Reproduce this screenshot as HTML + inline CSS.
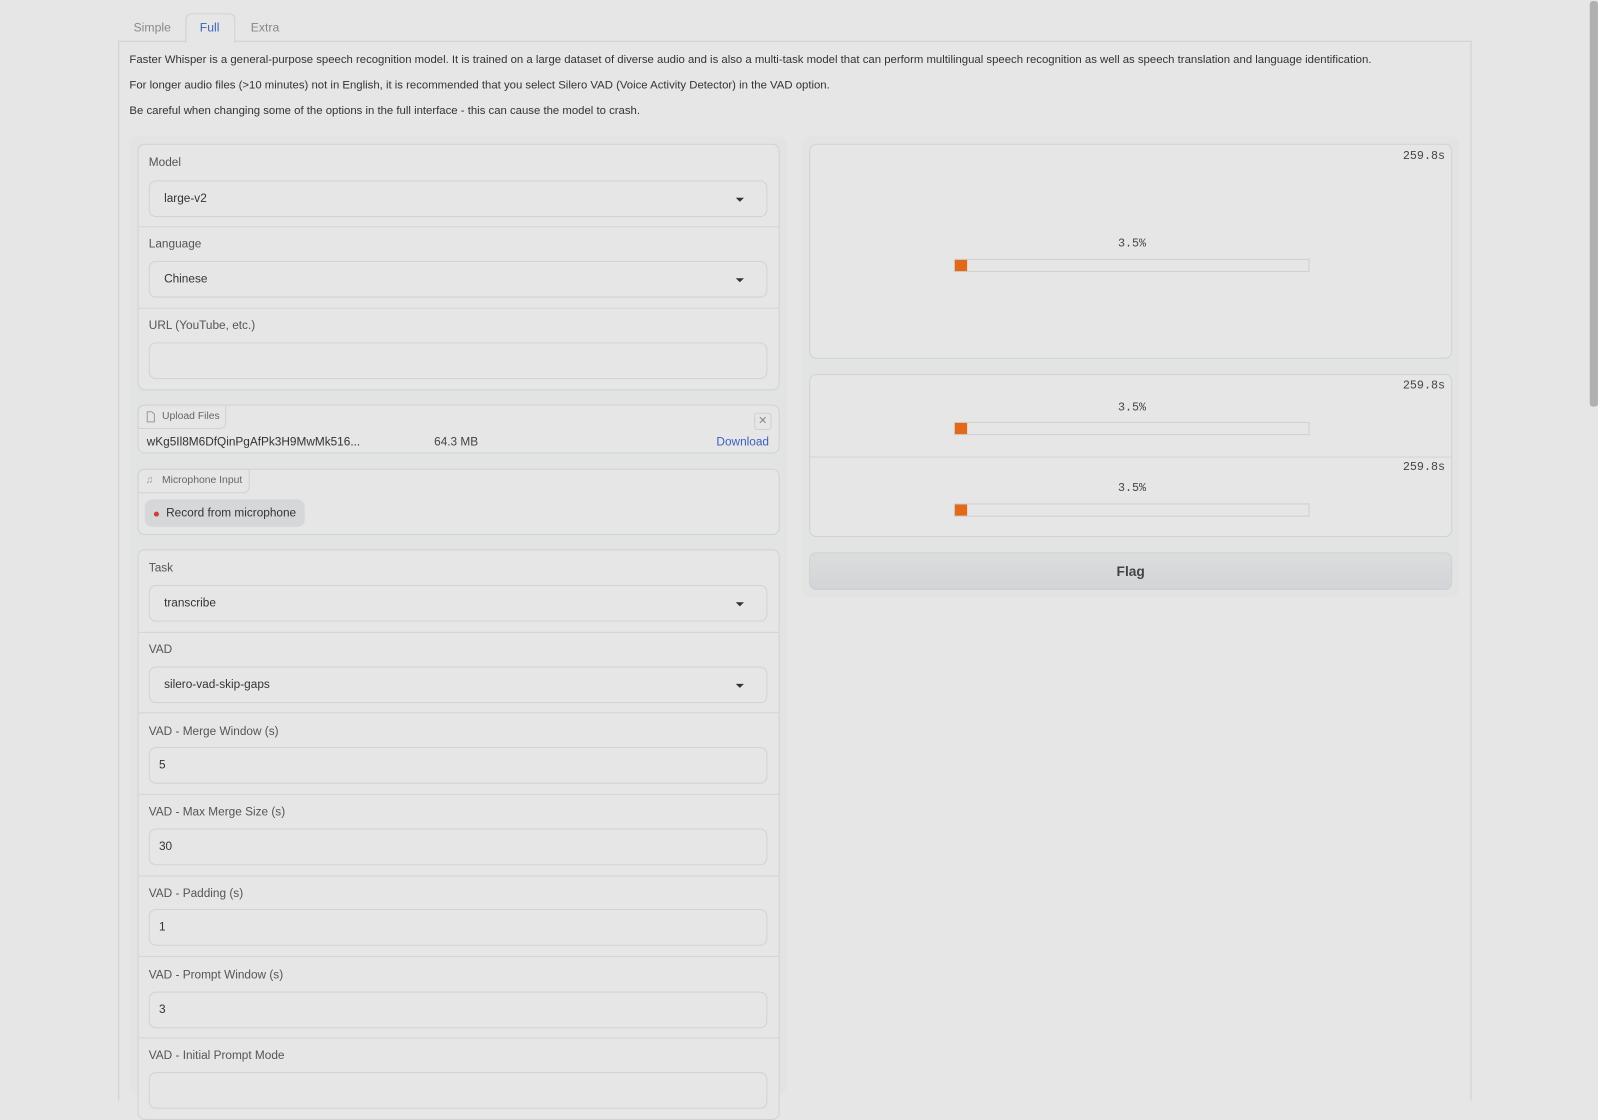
<!DOCTYPE html>
<html><head><meta charset="utf-8"><style>
html,body{margin:0;padding:0;width:1598px;height:1081px;overflow:hidden;background:#e6e6e6;}
#w{position:absolute;left:0;top:0;width:1568px;height:1061px;transform:scale(1.0191);transform-origin:0 0;font-family:"Liberation Sans",sans-serif;color:#3c3c3c;font-size:11.6px;}
.a{position:absolute;box-sizing:border-box;}
.lbl{position:absolute;font-size:11.6px;color:#555;}
.in{position:absolute;left:11px;width:607px;height:36px;border:1px solid #d2d2d2;border-radius:7px;background:#e6e6e6;box-sizing:border-box;font-size:11.6px;padding:10px 14px;color:#333;}
.arr{position:absolute;right:22px;top:16px;width:0;height:0;border-left:4px solid transparent;border-right:4px solid transparent;border-top:4px solid #333;}
.sep{position:absolute;left:0;right:0;height:1px;background:#d4d4d4;}
.mono{font-family:"Liberation Mono",monospace;font-size:11.5px;color:#444;position:absolute;}
.bar{position:absolute;left:141px;width:349px;height:13px;border:1px solid #cfcfcf;box-sizing:border-box;background:#e6e6e6;}
.bar i{position:absolute;left:0;top:0;width:12px;height:11px;background:#e2691a;}
</style></head><body><div id="w">
<div class="a" style="left:131px;top:20px;color:#888;font-size:12px">Simple</div>
<div class="a" style="left:182px;top:13px;width:49px;height:29px;border:1px solid #d0d0d0;border-bottom:none;border-radius:6px 6px 0 0;background:#e6e6e6;z-index:2"></div>
<div class="a" style="left:196px;top:20px;color:#3c64b4;font-size:12px;z-index:3">Full</div>
<div class="a" style="left:246px;top:20px;color:#888;font-size:12px">Extra</div>
<div class="a" style="left:116px;top:40px;width:1328px;height:1040px;border:1px solid #d0d0d0;border-bottom:none"></div>
<div class="a" style="left:127px;top:53px;font-size:11.15px;color:#333;white-space:nowrap">Faster Whisper is a general-purpose speech recognition model. It is trained on a large dataset of diverse audio and is also a multi-task model that can perform multilingual speech recognition as well as speech translation and language identification.</div>
<div class="a" style="left:127px;top:78px;font-size:11.15px;color:#333;white-space:nowrap">For longer audio files (&gt;10 minutes) not in English, it is recommended that you select Silero VAD (Voice Activity Detector) in the VAD option.</div>
<div class="a" style="left:127px;top:103px;font-size:11.15px;color:#333;white-space:nowrap">Be careful when changing some of the options in the full interface - this can cause the model to crash.</div>
<div class="a" style="left:127px;top:134px;width:645px;height:940px;background:#e2e3e3;border-radius:8px"></div>
<div class="a" style="left:787px;top:134px;width:645px;height:452px;background:#e2e3e3;border-radius:8px"></div>
<div class="a" style="left:135px;top:141px;width:630px;height:242px;border:1px solid #d2d2d2;border-radius:7px;background:#e6e6e6">
 <div class="lbl" style="left:10px;top:11px">Model</div>
 <div class="in" style="top:35px;left:10px">large-v2<div class="arr"></div></div>
 <div class="sep" style="top:80px"></div>
 <div class="lbl" style="left:10px;top:91px">Language</div>
 <div class="in" style="top:114px;left:10px">Chinese<div class="arr"></div></div>
 <div class="sep" style="top:160px"></div>
 <div class="lbl" style="left:10px;top:171px">URL (YouTube, etc.)</div>
 <div class="in" style="top:194px;left:10px"></div>
</div>
<div class="a" style="left:135px;top:397px;width:630px;height:48px;border:1px solid #d2d2d2;border-radius:7px;background:#e6e6e6">
 <div class="a" style="left:-1px;top:-1px;width:87px;height:24px;border:1px solid #d2d2d2;border-radius:6px 0 6px 0;font-size:10.2px;color:#666;padding:5px 0 0 23px">Upload Files</div>
 <svg class="a" style="left:7px;top:5px" width="10" height="12" viewBox="0 0 10 12"><path d="M1.5 1h4.5l2.5 2.5v7.5h-7z" fill="none" stroke="#999" stroke-width="1"/></svg>
 <div class="a" style="left:604px;top:7px;width:17px;height:17px;border:1px solid #d0d0d0;border-radius:3px;color:#888;font-size:11px;text-align:center;line-height:15px">✕</div>
 <div class="a" style="left:8px;top:29px;font-size:11.6px;color:#333">wKg5Il8M6DfQinPgAfPk3H9MwMk516...</div>
 <div class="a" style="left:290px;top:29px;font-size:11.6px;color:#444">64.3 MB</div>
 <div class="a" style="left:567px;top:29px;font-size:11.6px;color:#3b5fc0">Download</div>
</div>
<div class="a" style="left:135px;top:460px;width:630px;height:65px;border:1px solid #d2d2d2;border-radius:7px;background:#e6e6e6">
 <div class="a" style="left:-1px;top:-1px;width:110px;height:24px;border:1px solid #d2d2d2;border-radius:6px 0 6px 0;font-size:10.2px;color:#666;padding:5px 0 0 23px">Microphone Input</div>
 <div class="a" style="left:7px;top:5px;font-size:10px;color:#999">♫</div>
 <div class="a" style="left:6px;top:29px;width:157px;height:27px;border-radius:7px;background:#d6d7d9;font-size:11.6px;color:#333;padding:7px 0 0 21px">Record from microphone</div>
 <div class="a" style="left:15px;top:41px;width:5px;height:5px;border-radius:50%;background:#d23c3c"></div>
</div>
<div class="a" style="left:135px;top:539px;width:630px;height:560px;border:1px solid #d2d2d2;border-radius:7px;background:#e6e6e6">
 <div class="lbl" style="left:10px;top:11px">Task</div>
 <div class="in" style="top:34px;left:10px">transcribe<div class="arr"></div></div>
 <div class="sep" style="top:80px"></div>
 <div class="lbl" style="left:10px;top:91px">VAD</div>
 <div class="in" style="top:114px;left:10px">silero-vad-skip-gaps<div class="arr"></div></div>
 <div class="sep" style="top:159px"></div>
 <div class="lbl" style="left:10px;top:171px">VAD - Merge Window (s)</div>
 <div class="in" style="top:193px;left:10px;padding-left:9px">5</div>
 <div class="sep" style="top:239px"></div>
 <div class="lbl" style="left:10px;top:250px">VAD - Max Merge Size (s)</div>
 <div class="in" style="top:273px;left:10px;padding-left:9px">30</div>
 <div class="sep" style="top:319px"></div>
 <div class="lbl" style="left:10px;top:330px">VAD - Padding (s)</div>
 <div class="in" style="top:352px;left:10px;padding-left:9px">1</div>
 <div class="sep" style="top:398px"></div>
 <div class="lbl" style="left:10px;top:410px">VAD - Prompt Window (s)</div>
 <div class="in" style="top:433px;left:10px;padding-left:9px">3</div>
 <div class="sep" style="top:478px"></div>
 <div class="lbl" style="left:10px;top:489px">VAD - Initial Prompt Mode</div>
 <div class="in" style="top:512px;left:10px"></div>
</div>
<div class="a" style="left:794px;top:141px;width:631px;height:211px;border:1px solid #d2d2d2;border-radius:7px;background:#e6e6e6">
 <div class="mono" style="right:6px;top:5px">259.8s</div>
 <div class="mono" style="left:302px;top:91px">3.5%</div>
 <div class="bar" style="top:112px"><i></i></div>
</div>
<div class="a" style="left:794px;top:367px;width:631px;height:160px;border:1px solid #d2d2d2;border-radius:7px;background:#e6e6e6">
 <div class="mono" style="right:6px;top:4px">259.8s</div>
 <div class="mono" style="left:302px;top:26px">3.5%</div>
 <div class="bar" style="top:46px"><i></i></div>
 <div class="sep" style="top:80px"></div>
 <div class="mono" style="right:6px;top:84px">259.8s</div>
 <div class="mono" style="left:302px;top:105px">3.5%</div>
 <div class="bar" style="top:126px"><i></i></div>
</div>
<div class="a" style="left:794px;top:542px;width:631px;height:37px;border:1px solid #d0d0d0;border-radius:7px;background:linear-gradient(#dcdddf,#d3d4d7);font-size:13.5px;font-weight:bold;color:#444;text-align:center;line-height:35px">Flag</div>
<div class="a" style="left:1560px;top:1px;width:8px;height:398px;background:#b0b0b0;border-radius:3px"></div>
</div></body></html>
